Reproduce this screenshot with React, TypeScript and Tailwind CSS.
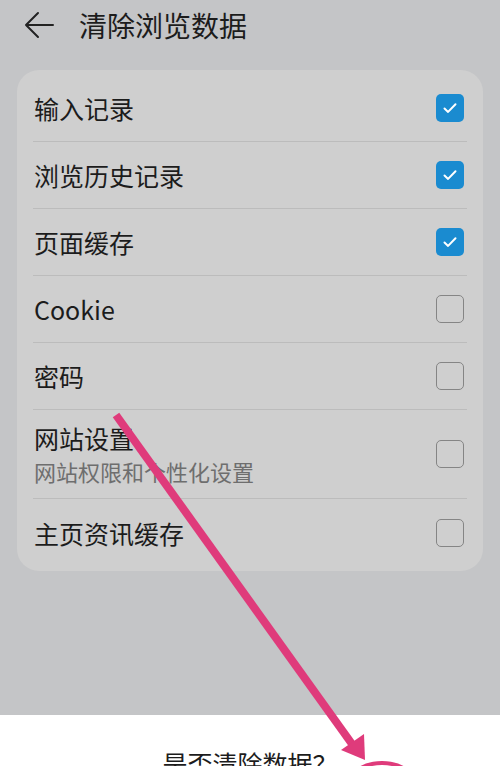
import { type ReactNode } from 'react'

// ---------------------------------------------------------------------------
// Data
// ---------------------------------------------------------------------------

interface Item {
  label: string
  sub?: string
  checked: boolean
}

const items: Item[] = [
  { label: '输入记录', checked: true },
  { label: '浏览历史记录', checked: true },
  { label: '页面缓存', checked: true },
  { label: 'Cookie', checked: false },
  { label: '密码', checked: false },
  { label: '网站设置', sub: '网站权限和个性化设置', checked: false },
  { label: '主页资讯缓存', checked: false },
]

const font = { fontFamily: '"Noto Sans CJK SC", "Noto Sans", sans-serif' }

// ---------------------------------------------------------------------------
// Pieces
// ---------------------------------------------------------------------------

function Checkbox({ checked }: { checked: boolean }) {
  if (checked) {
    return (
      <span className="flex h-[28px] w-[28px] shrink-0 items-center justify-center rounded-[5px] bg-[#1a8bd0]">
        <svg width="18" height="18" viewBox="0 0 18 18" fill="none">
          <path d="M3.5 9.5l3.6 3.4 7.4-7.6" stroke="#fff" strokeWidth="2" strokeLinecap="round" strokeLinejoin="round" />
        </svg>
      </span>
    )
  }
  return <span className="h-[28px] w-[28px] shrink-0 rounded-[5px] border-[1.5px] border-[#858585]" />
}

function Row({ item, last }: { item: Item; last: boolean }): ReactNode {
  return (
    <div
      className={
        'flex items-center justify-between pl-[1px] pr-[3px] ' +
        (item.sub ? 'h-[89px] ' : 'h-[67px] ') +
        (last ? '' : 'border-b border-[#bcbcbc]')
      }
    >
      <div className="flex flex-col gap-[4px]">
        <span className="text-[25px] leading-[30px] text-[#1c1c1c]">{item.label}</span>
        {item.sub && <span className="text-[22px] leading-[28px] text-[#6e6e6e]">{item.sub}</span>}
      </div>
      <Checkbox checked={item.checked} />
    </div>
  )
}

// ---------------------------------------------------------------------------
// App
// ---------------------------------------------------------------------------

export default function App() {
  return (
    <div className="relative flex h-[766px] w-[500px] flex-col overflow-hidden bg-[#c4c5c7]" style={font}>
      <header className="flex h-[50px] items-center">
        <svg className="ml-[24px]" width="30" height="30" viewBox="0 0 30 30" fill="none">
          <path d="M29 15H2M14 3L2 15l12 12" stroke="#222" strokeWidth="2" strokeLinecap="round" strokeLinejoin="round" />
        </svg>
        <h1 className="ml-[25px] text-[28px] leading-none text-[#1c1c1c]">清除浏览数据</h1>
      </header>

      <div className="mx-[17px] mt-[20px] rounded-[22px] bg-[#cfcfcf] px-[16px] py-[5px]">
        {items.map((item, i) => (
          <Row key={item.label} item={item} last={i === items.length - 1} />
        ))}
      </div>

      <div className="flex-1" />

      <div className="flex h-[51px] justify-center bg-white pt-[33px]">
        <span className="text-[25px] leading-[30px] text-[#1c1c1c]">是否清除数据？</span>
      </div>

      {/* annotation arrow drawn over the screenshot */}
      <svg className="pointer-events-none absolute inset-0" width="500" height="766" viewBox="0 0 500 766">
        <line x1="116" y1="415" x2="352" y2="744" stroke="#df3b7b" strokeWidth="8" />
        <path d="M341 750L365 760L364 734Z" fill="#df3b7b" />
        <ellipse cx="382" cy="790" rx="36" ry="27" fill="none" stroke="#df3b7b" strokeWidth="4" />
      </svg>
    </div>
  )
}
